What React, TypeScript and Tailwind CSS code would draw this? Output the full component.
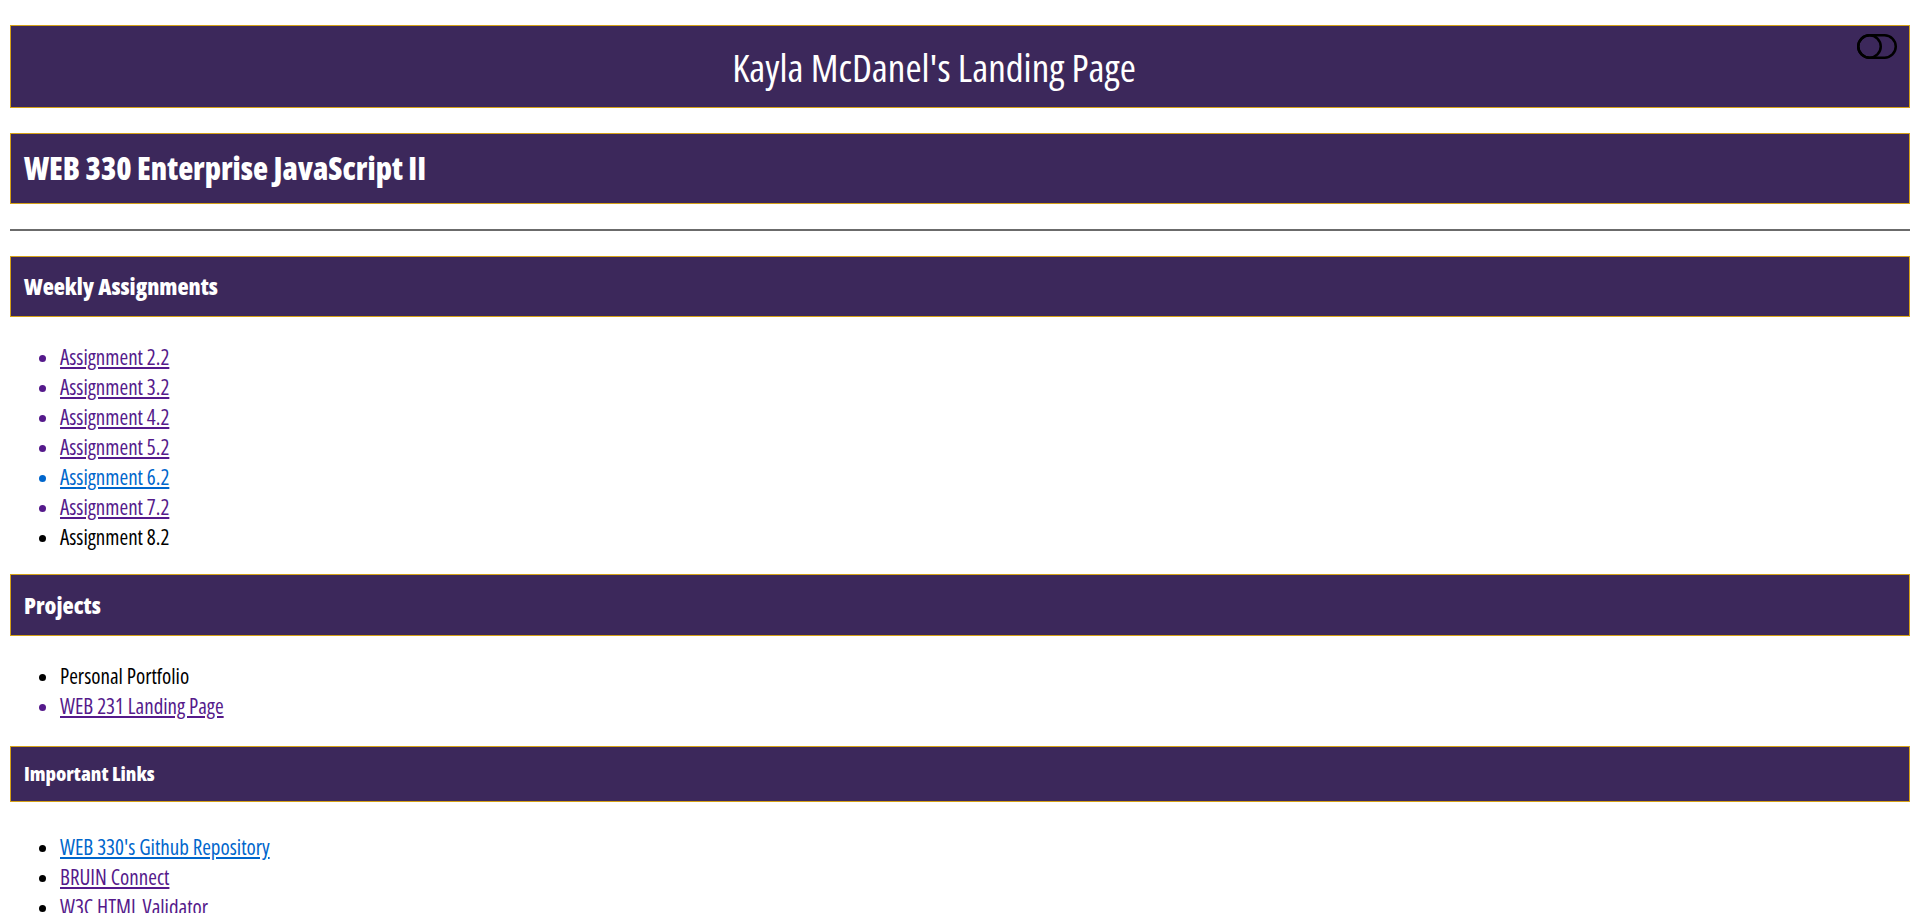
import React from "react";

// Oswald isn't installed; Open Sans at its narrowest width is the nearest match
const FONT = "font-['Open_Sans','DejaVu_Sans_Condensed',sans-serif] [font-stretch:75%]";

const weekly = [
  { label: "Assignment 2.2", tone: "visited" },
  { label: "Assignment 3.2", tone: "visited" },
  { label: "Assignment 4.2", tone: "visited" },
  { label: "Assignment 5.2", tone: "visited" },
  { label: "Assignment 6.2", tone: "link" },
  { label: "Assignment 7.2", tone: "visited" },
  { label: "Assignment 8.2", tone: "plain" },
];

function ToggleIcon() {
  return (
    <svg width="40" height="25" viewBox="0 0 40 25" className="mr-[12px] mt-[8px] shrink-0">
      <rect x="1.25" y="1.25" width="37.5" height="22.5" rx="11.25" fill="none" stroke="#000" strokeWidth="2.5" />
      <circle cx="12.5" cy="12.5" r="11.25" fill="none" stroke="#000" strokeWidth="2.5" />
    </svg>
  );
}

function Item({ label, tone }: { label: string; tone: string }) {
  if (tone === "plain") return <li className="marker:text-black">{label}</li>;
  const color = tone === "link" ? "text-[#0066cc] marker:text-[#0066cc]" : "text-[#551a8b] marker:text-[#551a8b]";
  return (
    <li className={color}>
      <a href="#" className="underline">
        {label}
      </a>
    </li>
  );
}

export default function App() {
  return (
    <div className={`min-h-screen bg-white px-[10px] pt-[25px] pb-10 text-black ${FONT}`}>
      <header className="flex h-[83px] items-start border border-[#d4a017] bg-[#3c285b]">
        <h1 className="flex-1 self-center text-center text-[39px] leading-none font-normal text-white">
          Kayla McDanel's Landing Page
        </h1>
        <ToggleIcon />
      </header>

      <h2 className="mt-[25px] flex h-[71px] items-center border border-[#d4a017] bg-[#3c285b] pl-[13px] text-[31px] font-extrabold text-white">
        WEB 330 Enterprise JavaScript II
      </h2>

      <hr className="mt-[25px] border-t-2 border-[#6b6b6b]" />

      <h3 className="mt-[25px] flex h-[61px] items-center border border-[#d4a017] bg-[#3c285b] pl-[13px] text-[23px] font-extrabold text-white">
        Weekly Assignments
      </h3>
      <ul className="mt-[25px] list-disc pl-[50px] text-[21px] leading-[30px]">
        {weekly.map((w) => (
          <Item key={w.label} label={w.label} tone={w.tone} />
        ))}
      </ul>

      <h3 className="mt-[22px] flex h-[62px] items-center border border-[#d4a017] bg-[#3c285b] pl-[13px] text-[23px] font-extrabold text-white">
        Projects
      </h3>
      <ul className="mt-[25px] list-disc pl-[50px] text-[21px] leading-[30px]">
        <li>Personal Portfolio</li>
        <Item label="WEB 231 Landing Page" tone="visited" />
      </ul>

      <h4 className="mt-[25px] flex h-[56px] items-center border border-[#d4a017] bg-[#3c285b] pl-[13px] text-[20px] font-extrabold text-white">
        Important Links
      </h4>
      <ul className="mt-[30px] list-disc pl-[50px] text-[21px] leading-[30px] marker:text-black">
        <li className="text-[#0066cc]">
          <a href="#" className="underline">WEB 330's Github Repository</a>
        </li>
        <li className="text-[#551a8b]">
          <a href="#" className="underline">BRUIN Connect</a>
        </li>
        <li className="text-[#551a8b]">
          <a href="#" className="underline">W3C HTML Validator</a>
        </li>
      </ul>
    </div>
  );
}
